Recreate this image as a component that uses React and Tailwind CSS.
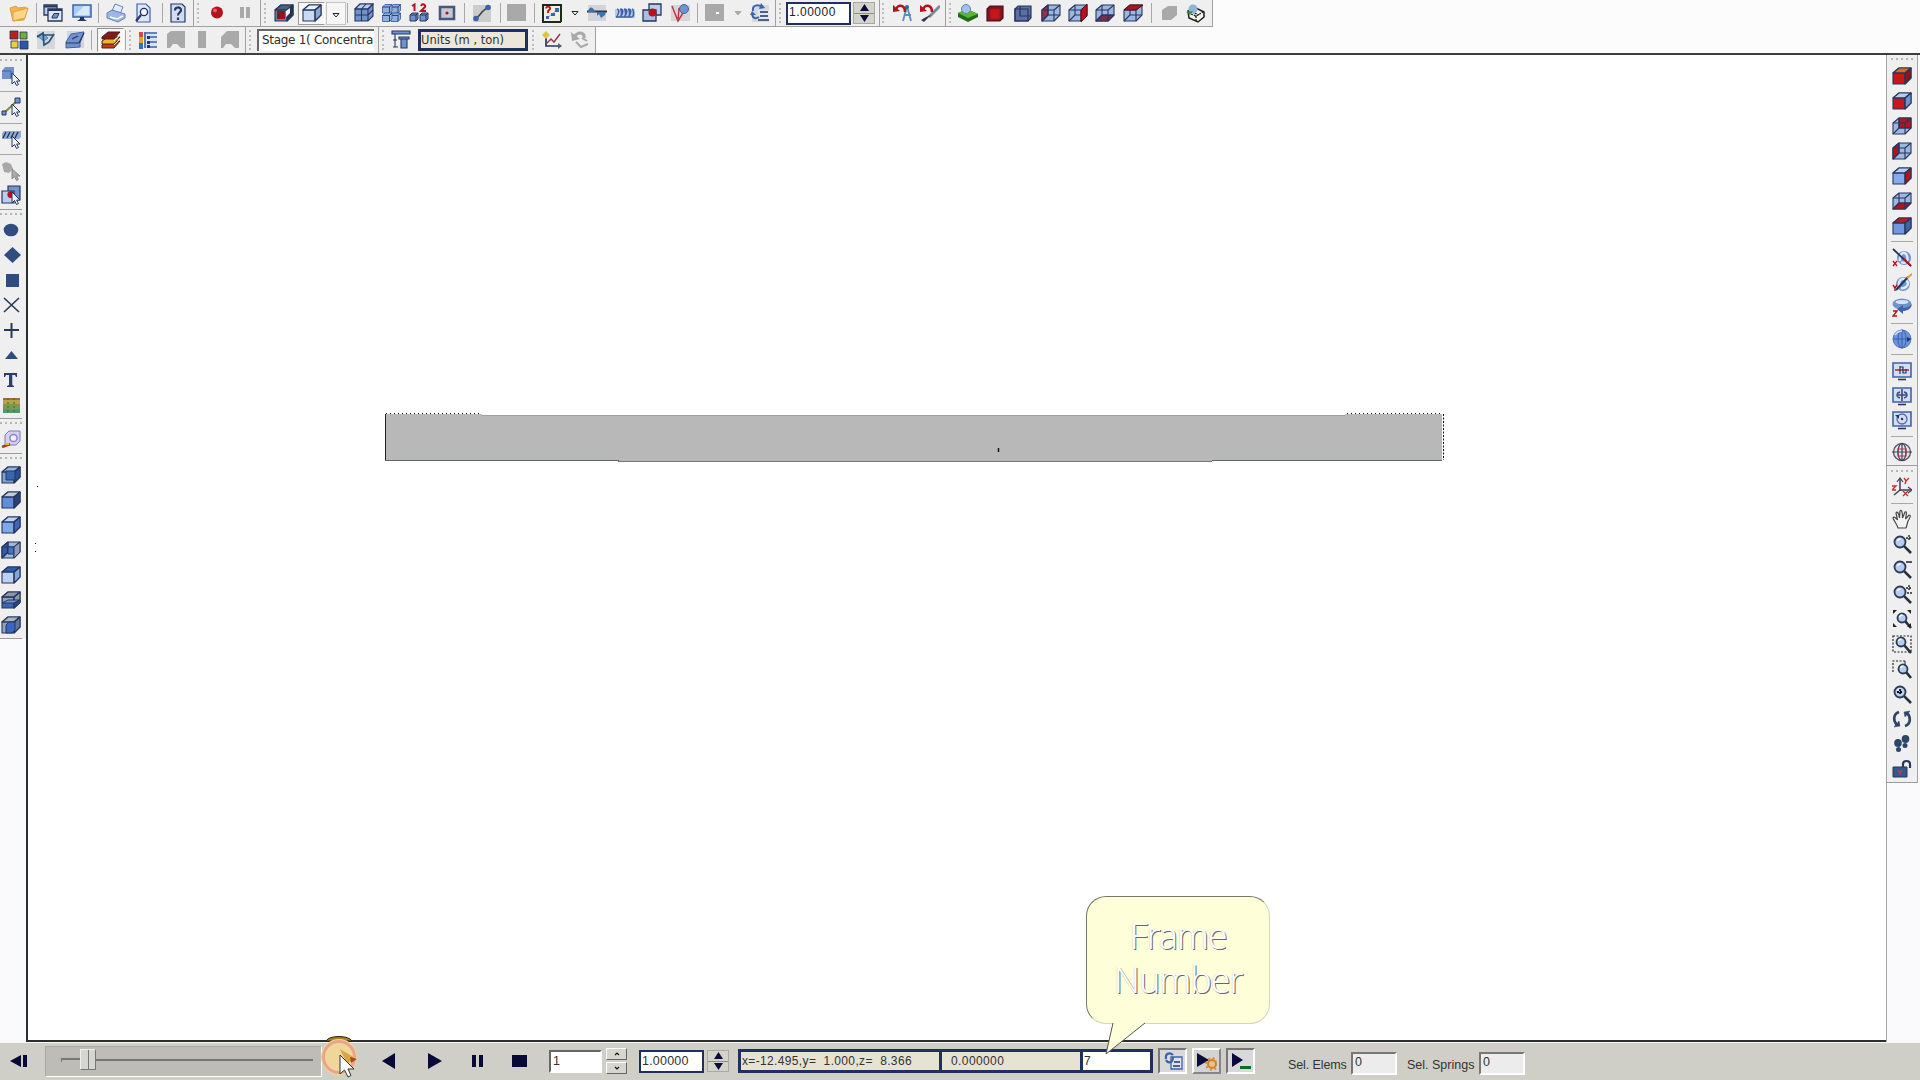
import React from "react";

const N = "#26365c";
const B = "#6f93cf";
const L = "#b9cdf0";
const D = "#3f63a8";
const R = "#b5121b";
const G = "#a9a9a9";

function Svg({ children, w = 20, h = 20 }) {
  return (
    <svg width={w} height={h} viewBox={`0 0 ${w} ${h}`} fill="none" className="block shrink-0">
      {children}
    </svg>
  );
}

function CubeShape({ f = B, t = L, s = D, wire, back, left, bottom }) {
  return (
    <g stroke={N} strokeWidth="1.1" strokeLinejoin="round">
      <path d="M1 7 7 2H19V12L13 18H1Z" fill={wire ? "#9db6e2" : f} />
      {!wire && <path d="M1 7 7 2H19L13 7Z" fill={t} />}
      {!wire && <path d="M13 7 19 2V12L13 18Z" fill={s} />}
      {wire && back && <path d="M7 2H19V12H7Z" fill={back} />}
      {wire && left && <path d="M1 7 7 2V12L1 18Z" fill={left} />}
      {wire && bottom && <path d="M1 18 7 12H19L13 18Z" fill={bottom} />}
      {wire && <path d="M7 2V12H19M7 12 1 18" />}
      <path d="M1 7H13V18M13 7 19 2" />
    </g>
  );
}

const Pointer = () => (
  <path d="M11 7V18L13.5 15.5 15.5 19.5 17.5 18.5 15.6 15H19Z" fill="#eef3fb" stroke={N} strokeWidth="1" />
);

function Lens({ x = 8, y = 8, r = 5.5 }) {
  return (
    <g>
      <path d={`M${x + r * 0.7} ${y + r * 0.7} 19 19`} stroke="#27303f" strokeWidth="2.6" />
      <circle cx={x} cy={y} r={r} fill="#b5cdf3" stroke="#2c3a55" strokeWidth="1.8" />
      <path d={`M${x - 2.5} ${y - 1}a3 3 0 0 1 3-2`} stroke="#fff" strokeWidth="1.3" />
    </g>
  );
}

const Monitor = ({ children }) => (
  <g>
    <path d="M1 2H19V16H1Z" fill="#d3def3" stroke={D} strokeWidth="1.6" />
    <path d="M6 18.5H14" stroke={N} strokeWidth="1.6" />
    {children}
  </g>
);

const UndoRed = () => (
  <g>
    <path d="M3 7C4 1 12 1 12 9" stroke={R} strokeWidth="2.6" />
    <path d="M0 2 0 9 7 8Z" fill={R} />
  </g>
);

const GridCube = ({ x = 0, y = 0, k = 1 }) => (
  <g transform={`translate(${x} ${y}) scale(${k})`} stroke={N} strokeWidth="1.1">
    <path d="M1 6 6 1H19V13L14 18H1Z" fill={B} />
    <path d="M1 6 6 1H19L14 6Z" fill={L} />
    <path d="M1 6H14V18M14 6 19 1M7.5 6V18M1 12H14L19 7M7.5 6 12 1" />
  </g>
);

const MiniCube = ({ x, y }) => (
  <g transform={`translate(${x} ${y})`} stroke={D} strokeWidth=".9">
    <path d="M.5 3 3 .5H10V6.500L7.500 9H.5Z" fill="#8fb0de" />
    <path d="M.5 3H7.500V9M7.500 3 10 .5" stroke={N} />
  </g>
);

const icons = {
  folder: (
    <g stroke="#e0a040" strokeWidth="1">
      <path d="M1 5 7 3 9 5 17 4V8L15 17 4 18Z" fill="#f2b650" />
      <path d="M4 9 19 5 16 15 4 18Z" fill="#fbd58a" />
    </g>
  ),
  windows: (
    <g stroke={N} strokeWidth="1.3">
      <path d="M1 2H14V12H1Z" fill={L} />
      <path d="M1 3.5H14" strokeWidth="2" />
      <path d="M5 6H19V18H5Z" fill="#dfe8f8" />
      <path d="M5 7H19" strokeWidth="2" />
      <path d="M9 14 11 10.500H16L14 15H9Z" fill={B} strokeWidth="1" />
    </g>
  ),
  monitor: (
    <g>
      <path d="M1 2H19V14H1Z" fill="#a9cdf5" stroke={D} strokeWidth="1.5" />
      <path d="M3 12 12 3H17V12Z" fill="#d7eafd" />
      <path d="M8 14H12V16L15 18H5L8 16Z" fill={N} />
    </g>
  ),
  printer: (
    <g stroke="#6681b8" strokeWidth="1">
      <path d="M6 8 9 1 17 4 14 11Z" fill="#e4eefb" />
      <path d="M1 10 6 7 19 11V15L12 19 1 15Z" fill="#9db7e3" />
      <path d="M4 14 11 16 17 13" stroke="#fff" strokeWidth="1.6" />
    </g>
  ),
  docsearch: (
    <g>
      <path d="M3 1H12L16 5V19H3Z" fill="#dde7f7" stroke={D} strokeWidth="1.2" />
      <path d="M7 12 2 18" stroke={N} strokeWidth="2.2" />
      <circle cx="10" cy="9" r="3.6" fill="#f1f6fe" stroke={N} strokeWidth="1.4" />
    </g>
  ),
  help: (
    <g>
      <path d="M3 1H14L17 4V19H3Z" fill="#cfdcf3" stroke={N} strokeWidth="1.2" />
      <path d="M7 7.5C7 3.5 13 3.5 13 7.3 13 9.6 10 9.5 10 12.5M10 14.5V17" stroke={N} strokeWidth="2.2" />
    </g>
  ),
  record: (
    <g>
      <circle cx="10" cy="9.5" r="6" fill={R} />
      <circle cx="8" cy="7.5" r="2" fill="#e4605f" />
    </g>
  ),
  pause: <path d="M5 4H9V15H5ZM11 4H15V15H11Z" fill={G} />,
  cubeDark: (
    <g>
      <CubeShape f="#6f7f9e" t="#4d5f86" s="#23304e" />
      <path d="M3 8H11V16H3Z" fill="#8e1420" />
      <path d="M12 8 16 5V10L12 14Z" fill="#f6f6f6" />
    </g>
  ),
  cubeLight: <CubeShape f="#c9dbf2" t="#e9f2fc" s="#8ba9d4" />,
  gridCube: <GridCube />,
  multiCube: (
    <g>
      <MiniCube x={9.500} y={1} />
      <MiniCube x={1} y={1} />
      <MiniCube x={9.500} y={9.500} />
      <MiniCube x={1} y={9.500} />
    </g>
  ),
  twelve: (
    <g>
      <path d="M3 3 5.500 1.5V8M12 3C13 0 17 1.500 16 4L12 8H17" stroke={R} strokeWidth="2" />
      <g stroke={N}>
        <path d="M1 12 3 10H9V16L7 18H1ZM11 12 13 10H19V16L17 18H11Z" fill={B} />
        <path d="M1 12H7V18M7 12 9 10M11 12H17V18M17 12 19 10" />
      </g>
    </g>
  ),
  frame: (
    <g>
      <path d="M3 4H17V16H3Z" fill="#c3c9d6" stroke="#4a5876" strokeWidth="2.6" />
      <circle cx="10" cy="10" r="1.6" fill={R} />
    </g>
  ),
  beads: (
    <g>
      <path d="M1 2H19V19H1Z" fill="#cccccc" />
      <path d="M4 15C8 14 9 7 16 5" stroke="#3a4a4a" strokeWidth="1.6" />
      <circle cx="4" cy="15.500" r="2.800" fill={D} />
      <circle cx="16" cy="4.500" r="2.800" fill={D} />
    </g>
  ),
  gray: <path d="M0 1H19V18H0Z" fill={G} />,
  grayDot: (
    <g>
      <path d="M0 1H19V18H0Z" fill={G} />
      <path d="M11 9H14V11H11Z" fill="#fff" />
    </g>
  ),
  check: (
    <g>
      <path d="M1 1H19V19H1Z" fill="#eef0e8" />
      <path d="M1 1V19H19M1 2H19V19" stroke="#1c2b16" strokeWidth="2" />
      <path d="M4 5.500C4 3 9 3 8 6L6 8V10" stroke={R} strokeWidth="1.800" />
      <path d="M4 16 16 6" stroke={G} />
      <path d="M13 5H17V9H13ZM9 10H13V13H9ZM4 13H7V16H4Z" fill={D} />
    </g>
  ),
  spring: (
    <g>
      <path d="M1 2H19V18H1Z" fill="#d2d4d8" />
      <path d="M0 8.500H20" stroke={N} strokeWidth="2" />
      <path d="M1 9C2 3 6 3 8 9ZM10 9V13L12 11 14 15 18 12 19 9Z" fill="#3c72ab" />
    </g>
  ),
  coils: (
    <g>
      <path d="M0 6H20V15H0Z" fill="#b9c9e6" />
      <path
        d="M2 6C6 7 2 14 1 14H5C8 12 6 6 5 6M6 6C10 7 6 14 5 14H9C12 12 10 6 9 6M10 6C14 7 10 14 9 14H13C16 12 14 6 13 6M14 6C18 7 14 14 13 14H17C20 12 18 6 17 6"
        stroke={D} strokeWidth="1.500"
      />
    </g>
  ),
  overlap: (
    <g>
      <path d="M7 1H19V12H7Z" fill={L} stroke={N} strokeWidth="1.300" />
      <path d="M1 7H14V18H1Z" fill="#a9bfe6" stroke={N} strokeWidth="1.300" />
      <circle cx="10.500" cy="9.500" r="4" fill={R} />
    </g>
  ),
  overlapPtr: (
    <g>
      <path d="M7 1H19V15H7Z" fill={B} stroke={N} strokeWidth="1.200" />
      <path d="M1 6H13V18H1Z" fill={L} stroke={N} strokeWidth="1.200" />
      <circle cx="10" cy="9.500" r="3.600" fill={R} />
      <Pointer />
    </g>
  ),
  branch: (
    <g>
      <path d="M1 2H20V18H1Z" fill="#d6d6d8" />
      <path d="M2 3 8 18 16 5M8 18 9 5" stroke="#bf3a45" strokeWidth="1.500" />
      <circle cx="14" cy="6" r="4.500" fill={B} stroke={D} />
    </g>
  ),
  refresh: (
    <g>
      <path d="M2 2H19V19H2Z" fill="#d5d9e0" />
      <path d="M8 7H19V18H8Z" fill="#dfe8f8" />
      <path d="M10 9H18M10 13H18M8 17H19" stroke={N} strokeWidth="1.500" />
      <path d="M3 8C2 2 8 1 12 4M2 11C3 16 6 16 9 14" stroke={D} strokeWidth="2" />
      <path d="M11 0 15 5 9 6ZM0 12 2 8 6 12Z" fill={D} />
    </g>
  ),
  undoCompass: (
    <g>
      <path d="M14 3 10 18M14 3 18 18M11 12H18" stroke="#5d8cbd" strokeWidth="1.800" />
      <circle cx="14" cy="4" r="2" fill="#37648f" />
      <UndoRed />
    </g>
  ),
  undoBrush: (
    <g>
      <path d="M20 3 9 14" stroke="#7b899c" strokeWidth="3" />
      <path d="M11 12 4 19 1 17 6 14Z" fill="#303a4a" />
      <UndoRed />
    </g>
  ),
  land: (
    <g>
      <path d="M0 10 9 6 20 11V14L10 19 0 14Z" fill="#1f6b16" />
      <path d="M0 10 9 6 20 11 10 15Z" fill="#5bb432" />
      <circle cx="8" cy="6" r="4.500" fill="#9ec3e6" stroke="#6487a6" />
    </g>
  ),
  boxRed: (
    <g stroke="#4a1020" strokeWidth="1.200">
      <path d="M2 6 5 3H18V15L15 18H2Z" fill="#7d1420" />
      <path d="M5 6H15V16H5Z" fill="#c4161d" stroke="#a0141d" />
    </g>
  ),
  boxBlue: (
    <g stroke={N} strokeWidth="1.200">
      <path d="M2 6 5 3H18V15L15 18H2Z" fill="#5a6fa6" />
      <path d="M7 3V13H18M2 6H15V18H2Z" />
    </g>
  ),
  wireLeft: <CubeShape wire left="#9c2f45" />,
  wireRight: (
    <g>
      <CubeShape wire />
      <path d="M13 7 19 1V13L13 19Z" fill={R} stroke="#5a0d18" />
    </g>
  ),
  wireBottom: <CubeShape wire bottom="#7d2d46" />,
  wireTop: (
    <g>
      <CubeShape wire />
      <path d="M1 7 7 2H20L13 7Z" fill="#a31822" stroke="#5a0d18" />
    </g>
  ),
  grayHex: <path d="M3 7 9 3H18V12L12 17H3Z" fill={G} />,
  recycle: (
    <g>
      <path d="M2 8 10 5 18 9V14L12 19 3 15Z" fill="#f2f5ea" stroke="#1b1b1b" strokeWidth="1.500" />
      <path d="M5 11 10 13 17 9M10 13V18M6 9 13 12" stroke="#1b1b1b" strokeWidth="1.300" strokeDasharray="2 1" />
      <circle cx="7" cy="6" r="4.500" fill="#8fb4da" />
      <path d="M0 9 7 8 4 12Z" fill="#3e8b2b" />
    </g>
  ),
  tiles: (
    <g stroke="#22304d" strokeWidth=".8">
      <path d="M1 1H9V9H1Z" fill="#b52222" />
      <path d="M11 2H18V9H11Z" fill="#6fae3c" />
      <path d="M2 11H9V18H2Z" fill="#e6ce45" />
      <path d="M11 11H19V19H11Z" fill="#2d56ad" />
    </g>
  ),
  planeWave: (
    <g>
      <path d="M1 1H19V19H1Z" fill="#d5d7da" />
      <path d="M1 6 7 3 12 8 8 11Z" fill="#7aa5d4" stroke="#5a84b8" />
      <path d="M1 7 7 3 8 15 13 12 18 4M8 5H18" stroke="#24557f" strokeWidth="1.700" />
    </g>
  ),
  planeBlue: (
    <g>
      <path d="M2 1H19V18H2Z" fill="#d0d5de" />
      <path d="M1 12 6 4 19 2 15 13V17L1 18Z" fill={B} stroke={D} />
      <path d="M1 13H14L19 3M7 9 13 6" stroke={N} strokeWidth="1.200" />
    </g>
  ),
  books: (
    <g stroke="#4a2418" strokeWidth="1">
      <path d="M1 15 7 11H19L13 18H1Z" fill="#c8381d" />
      <path d="M1 11 7 7H19L13 14H1Z" fill="#f0b52d" />
      <path d="M1 7 7 2H19L13 9H1Z" fill="#7d1d1d" />
      <path d="M13 11 19 5M13 15 19 9" stroke="#fff0c0" />
    </g>
  ),
  tree: (
    <g>
      <path d="M6 2H19V18H6Z" fill="#d9e3f6" />
      <path d="M1 2H5V19H1Z" fill="#d44" />
      <path d="M1 7H5V14H1Z" fill="#e0a42a" />
      <path d="M1 13H5V19H1Z" fill="#2f72c0" />
      <path d="M7 2V18M7 3H19M9 7H19M9 12H19M9 17H19" stroke={D} strokeWidth="1.700" />
      <path d="M9 6H12V9H9ZM9 11H12V14H9ZM9 15H12V18H9Z" fill={N} />
    </g>
  ),
  grayA: <path d="M1 4 5 1H19V18H15L11 14H7L4 18H1Z" fill={G} />,
  grayB: <path d="M6 1H14V18H6Z" fill={G} />,
  grayC: <path d="M1 7 7 1H19V18H15L11 14H6L3 18H1Z" fill={G} />,
  supports: (
    <g fill={B} stroke={N} strokeWidth="1.100">
      <path d="M1 1H19V4H1ZM8 7H18V9H8ZM10 9H16V18H10Z" />
      <path d="M4 4V10M2 10H6M4 10V17M2 17H7" />
    </g>
  ),
  chart: (
    <g>
      <path d="M4 3V16H19" stroke={N} strokeWidth="1.700" />
      <path d="M4 14 9 9 12 12 18 4" stroke="#9a3b55" strokeWidth="1.500" />
      <path d="M0 5 4 1 8 5 4 9Z" fill="#d9c73f" />
      <path d="M16 19 20 16 16 13Z" fill="#467" />
    </g>
  ),
  undoGray: (
    <g>
      <path d="M5 6C9 1 15 3 14 8" stroke={G} strokeWidth="3" />
      <path d="M1 2 2 11 10 9Z" fill={G} />
      <path d="M6 12 11 17 18 14M12 8 17 11" stroke={G} strokeWidth="2" />
    </g>
  ),
  pickCube: (
    <g>
      <path d="M1 5 4 1H13V9L10 13H1Z" fill={B} />
      <path d="M1 5H10V13" stroke={D} />
      <Pointer />
    </g>
  ),
  pickLine: (
    <g>
      <path d="M3 16 17 3" stroke="#7d8a3a" strokeWidth="2" />
      <path d="M1 14H5V18H1ZM14 1H19V6H14Z" fill={B} stroke={N} />
      <Pointer />
    </g>
  ),
  pickSpring: (
    <g>
      <path d="M1 4 3 2H20V8L18 10H1Z" fill="#8fabd9" />
      <path d="M2 9 5 3M6 9 9 3M10 9 13 3M14 9 17 3" stroke={N} strokeWidth="1.400" />
      <Pointer />
    </g>
  ),
  pickGray: (
    <g fill={G}>
      <path d="M1 3 5 1 10 3 12 8 8 12 3 11Z" />
      <path d="M11 8V18L13.500 15.500 15.500 19.500 17.500 18.500 15.600 15H19Z" stroke="#8b8b8b" />
    </g>
  ),
  circle: <ellipse cx="10" cy="10" rx="7.300" ry="6.300" fill="#2f4d80" />,
  diamond: <path d="M11.500 2 20 10 11.500 18 3 10Z" fill="#2f4d80" />,
  square: <path d="M5 4H18V17H5Z" fill="#2f4d80" />,
  cross: <path d="M3 3 18 17M18 3 3 17" stroke="#27385c" strokeWidth="1.600" />,
  plus: <path d="M3 10H18M10.500 3V18" stroke="#27385c" strokeWidth="2" />,
  triangle: <path d="M4 14 10.500 6 17 14Z" fill="#2f4d80" />,
  tee: <path d="M3 7V3H16V7H15L14 5H11.300V15L13 16V17H6V16L8 15V5H5L4 7Z" fill="#2a3f6c" />,
  picture: (
    <g>
      <path d="M2 3H19V18H2Z" fill="#7d9a4c" />
      <path d="M2 3H19V5H2Z" fill="#a9683b" />
      <path d="M2 5H19V9H2Z" fill="#b9a24c" />
      <path d="M2 14H19V18H2Z" fill="#4e9a70" />
      <path d="M7 3V18M13 3V18" stroke="#3c6b2a" strokeDasharray="2 2" />
    </g>
  ),
  tape: (
    <g>
      <path d="M4 6 8 2H19V12L15 16H4Z" fill="#d5d0ef" stroke="#8079b8" />
      <circle cx="12.500" cy="9" r="3.600" fill="#eef" stroke="#8a86c8" strokeWidth="1.500" />
      <path d="M1 18 9 15" stroke="#b03a22" strokeWidth="2.600" />
      <path d="M4 15H8" stroke="#e5b52e" strokeWidth="2" />
    </g>
  ),
  c1: (
    <g>
      <CubeShape f="#7ba3d4" t="#8fb4de" s="#2b4f94" />
      <path d="M5 6H14V15H5Z" fill="#3a67b3" stroke={N} />
    </g>
  ),
  c2: <CubeShape f="#5f8fdc" t="#c5ccd8" s="#2a4377" />,
  c3: <CubeShape f="#7fa8e8" t="#bcd3f5" s="#3c69bd" />,
  c4: (
    <g>
      <CubeShape wire left="#33599f" />
      <path d="M7 7H13V14H7Z" fill="#4872bd" stroke={N} />
      <path d="M13 7 19 2V12L13 18Z" fill="#8e9cb8" stroke={N} />
    </g>
  ),
  c5: <CubeShape f="#bcd0f2" t="#2e5bb0" s="#84a5dc" />,
  c6: (
    <g>
      <CubeShape f="#3a66b3" t="#8d97a6" s="#8d97a6" />
      <path d="M2 8H12V12H2Z" fill="#9aa2ae" />
      <path d="M1 13 7 10H19L13 13Z" fill="#6f97d8" stroke={N} />
      <path d="M13 13 19 10V13L13 18Z" fill="#27478a" stroke={N} />
    </g>
  ),
  c7: (
    <g>
      <CubeShape f="#94a4bd" t="#aab4c4" s="#5f7699" />
      <path d="M5 10 8 7H14V15L11 18H5Z" fill="#3767c0" stroke={N} />
    </g>
  ),
  r1: <CubeShape f="#c8171c" t="#dd6a20" s="#8c1517" />,
  r2: <CubeShape f="#c8171c" t={L} s={B} />,
  r3: <CubeShape wire back="#b5121b" />,
  r4: <CubeShape wire left="#b5121b" />,
  r5: <CubeShape f="#84acec" t={L} s="#b5121b" />,
  r6: <CubeShape wire bottom="#b5121b" />,
  r7: <CubeShape f="#6f98e0" t="#c8171c" s={D} />,
  rotX: (
    <g>
      <circle cx="12" cy="10" r="7" fill={B} />
      <path d="M8 13C7 5 13 2 15 8S13 16 9 14" stroke="#dfe9fb" strokeWidth="2.400" />
      <path d="M1 1 19 18" stroke={N} strokeWidth="1.800" />
      <path d="M12 11 19 18" stroke={R} strokeWidth="1.800" />
      <path d="M1 13 5 18M5 13 1 18" stroke={R} strokeWidth="1.300" />
    </g>
  ),
  rotY: (
    <g>
      <circle cx="11" cy="11" r="7" fill={B} />
      <path d="M7 14C6 5 12 4 15 8S13 16 9 15" stroke="#dfe9fb" strokeWidth="2.400" />
      <path d="M4 17 16 4" stroke={N} strokeWidth="2" />
      <path d="M15 5 20 1" stroke="#e39b2a" strokeWidth="2" />
      <path d="M1 12 3 15 5 12M3 15V18" stroke={R} strokeWidth="1.400" />
    </g>
  ),
  rotZ: (
    <g>
      <ellipse cx="10" cy="7" rx="9.500" ry="5.500" fill={B} />
      <ellipse cx="10" cy="5" rx="6.500" ry="2" fill="#d8e3f6" />
      <path d="M20 7C19 13 14 14 11 14V17L5 12 11 8V11C14 11 17 10 20 7Z" fill={D} />
      <path d="M1 14H5L1 19H5" stroke={R} strokeWidth="1.400" />
    </g>
  ),
  globe: (
    <g>
      <circle cx="10" cy="10" r="9" fill="#6a93de" stroke="#5577c0" />
      <ellipse cx="10" cy="10" rx="4" ry="9" stroke="#3c5fae" />
      <path d="M1 10H19M10 1V19" stroke="#3c5fae" />
      <path d="M3 6C6 2 9 2 10 2" stroke="#cfe0fa" strokeWidth="1.500" />
      <path d="M15 8 19 10 15 13Z" fill={N} />
    </g>
  ),
  mon1: (
    <Monitor>
      <path d="M3 9H17" stroke={R} strokeWidth="1.400" />
      <path d="M8 5V13M8 6H11V12H14V8" stroke={N} strokeWidth="1.200" />
    </Monitor>
  ),
  mon2: (
    <Monitor>
      <path d="M10 3V15" stroke={N} strokeWidth="1.400" />
      <path d="M8 6C4 7 4 11 8 12M12 6C16 7 16 11 12 12M6 9H14" stroke="#374a80" strokeWidth="1.400" />
    </Monitor>
  ),
  mon3: (
    <Monitor>
      <circle cx="10" cy="9" r="5" stroke="#5a6da0" strokeWidth="1.300" />
      <circle cx="10" cy="9" r="1.200" fill={N} />
      <path d="M3 5H7V9Z" fill={N} />
    </Monitor>
  ),
  globeRed: (
    <g>
      <circle cx="10" cy="10" r="8.500" fill="#e7e6ee" stroke="#59596b" strokeWidth="1.400" />
      <ellipse cx="10" cy="10" rx="4" ry="8.500" stroke="#3e3e55" strokeWidth="1.200" />
      <path d="M0 10H20M10 1V19" stroke="#3e3e55" strokeWidth="1.200" />
      <path d="M6 7H14V14H6Z" stroke="#b5324e" strokeWidth="1.200" />
    </g>
  ),
  axes: (
    <g>
      <path d="M8 14V2M8 13H19M8 13 2 18" stroke="#3b4150" strokeWidth="1.500" />
      <path d="M5 5 8 1 11 5M16 10 20 13 16 16" stroke="#3b4150" strokeWidth="1.200" />
      <path d="M12 1 14 4 17 1M14 4 13 7M11 14 16 19M16 14 11 19M0 9H4L0 13H4" stroke="#c5333a" strokeWidth="1.400" />
    </g>
  ),
  hand: (
    <path
      d="M6 19C5 15 2 12 1 9 2 7 4 9 5.500 11L4 4C5 2 6.500 3 7.500 9L8 2C9 .5 10.500 1 10.500 9L13 3C14.500 2 15 4 13.500 10L17 6C19 6 18.500 8 16 12 15 15 15 17 14 19Z"
      fill="#f4f2f2" stroke="#494949" strokeWidth="1.200"
    />
  ),
  zoomIn: (<g><Lens /><path d="M14 4H20M17 1V7" stroke="#222" strokeWidth="1.400" strokeDasharray="2 1" /></g>),
  zoomOut: (<g><Lens /><path d="M14 3H20" stroke="#222" strokeWidth="1.500" /></g>),
  zoomPM: (<g><Lens /><path d="M14 4H20M17 1V7M15 9H20" stroke="#222" strokeWidth="1.400" strokeDasharray="2 1" /></g>),
  zoomFit: (<g><Lens x={10} y={9} r={4.500} /><path d="M1 1H5L1 5ZM19 1V5L15 1ZM1 18H5L1 14ZM19 18H15L19 14Z" fill="#222" /></g>),
  zoomBox: (<g><path d="M1 2H19V18H1Z" stroke="#222" strokeWidth="1.200" strokeDasharray="2 1.500" /><Lens x={9} y={8} r={4.500} /></g>),
  zoomArea: (<g><path d="M13 2H1V14" stroke="#222" strokeWidth="1.200" strokeDasharray="2 1.500" /><path d="M13 2V6" stroke="#222" /><Lens x={11} y={10} r={4.500} /></g>),
  zoomAll: (<g><Lens /><path d="M8 5V11M5 8H11" stroke="#111" strokeWidth="1.800" strokeDasharray="2 1" /></g>),
  rotate: (
    <g stroke="#2c4468" strokeWidth="2.600">
      <path d="M7 3C1 5 1 12 5 16M13 17C19 15 19 8 15 4" />
      <path d="M2 18 8 17 7 12ZM18 2 12 3 13 8Z" fill="#2c4468" strokeWidth=".5" />
    </g>
  ),
  feet: (
    <g fill="#2d4566">
      <ellipse cx="6" cy="9" rx="3.800" ry="4" />
      <ellipse cx="6.500" cy="15.500" rx="2.500" ry="2.500" />
      <ellipse cx="13.500" cy="5" rx="3.800" ry="4" />
      <ellipse cx="13" cy="11.500" rx="2.500" ry="2.500" />
    </g>
  ),
  lock: (
    <g>
      <path d="M1 8H15V18H1Z" fill="#34588c" stroke={N} />
      <path d="M11 8V5C11 1 18 1 18 5V9" stroke={N} strokeWidth="2.200" />
      <path d="M6 11 8 14 10 11M8 14V16" stroke="#c43b4a" strokeWidth="1.300" />
    </g>
  ),
};

const Icon = ({ n, m = "" }) => (
  <span className={`block h-5 w-5 shrink-0 ${m}`}>
    <Svg>{icons[n]}</Svg>
  </span>
);
const VSep = ({ m, full }) => (
  <span className={`block w-px shrink-0 ${full ? "h-full bg-[#a0a0a0]" : "h-5 bg-[#a8a8a8]"} ${m}`} />
);
const HSep = ({ m, full }) => (
  <span className={`block h-px shrink-0 ${full ? "w-full bg-[#9c9c9c]" : "w-[22px] bg-[#a8a8a8]"} ${m}`} />
);
const VGrip = ({ m }) => (
  <span className={`flex h-5 w-1 shrink-0 flex-col justify-between ${m}`}>
    {[0, 1, 2, 3, 4].map((i) => (
      <i key={i} className="block h-0.5 w-0.5 bg-[#bdbdbd]" />
    ))}
  </span>
);
const HGrip = ({ m }) => (
  <span className={`flex h-1 w-[22px] shrink-0 items-center justify-between ${m}`}>
    {[0, 1, 2, 3, 4].map((i) => (
      <i key={i} className="block h-0.5 w-0.5 bg-[#b5b5b5]" />
    ))}
  </span>
);
const Drop = ({ m, gray }) => (
  <span className={`block shrink-0 ${m}`}>
    <Svg w={8} h={6}>
      <path d="M1 1.500H7L4 5Z" fill={gray ? "#aaa" : "#fff"} stroke={gray ? "#aaa" : "#222"} />
    </Svg>
  </span>
);
const Spinner = ({ m }) => (
  <span className={`flex h-[22px] w-[22px] shrink-0 flex-col border border-[#a9a99f] bg-[#d3d3cb] ${m}`}>
    <span className="flex flex-1 items-center justify-center border-b border-[#8f8f8a]">
      <Svg w={11} h={8}><path d="M5.500 0 10 7H1Z" fill="#0b0b3c" /></Svg>
    </span>
    <span className="flex flex-1 items-center justify-center">
      <Svg w={11} h={8}><path d="M5.500 8 10 1H1Z" fill="#0b0b3c" /></Svg>
    </span>
  </span>
);

const render = (Sep, Grip) => ([n, m], i) => {
  if (n === "|") return <Sep key={i} m={m} />;
  if (n === "end") return <Sep key={i} m={m} full />;
  if (n === ":") return <Grip key={i} m={m} />;
  if (n === "drop") return <Drop key={i} m={m} />;
  if (n === "dropGray") return <Drop key={i} m={m} gray />;
  return <Icon key={i} n={n} m={m} />;
};
const across = render(VSep, VGrip);
const down = render(HSep, HGrip);

const top1a = [
  ["folder", "ml-[9px]"], ["|", "ml-[7px]"], ["windows", "ml-1.5"], ["monitor", "ml-[9px]"], ["|", "ml-1.5"],
  ["printer", "ml-[7px]"], ["docsearch", "ml-2"], ["|", "ml-2"], ["help", "ml-[5px]"], ["end", "ml-[5px]"],
  [":", "ml-[3px]"], ["record", "ml-1.5"], ["pause", "ml-2"], ["end", "ml-[5px]"], [":", "ml-[3px]"],
  ["cubeDark", "ml-1.5"],
];
const top1b = [
  ["|", "ml-px"], ["gridCube", "ml-1.5"], ["multiCube", "ml-[7px]"], ["twelve", "ml-2"], ["frame", "ml-2"],
  ["|", "ml-[7px]"], ["beads", "ml-[7px]"], ["|", "ml-2"], ["gray", "ml-1.5"], ["|", "ml-[7px]"],
  ["check", "ml-[7px]"], ["drop", "ml-[9px]"], ["spring", "ml-2"], ["coils", "ml-2"], ["overlap", "ml-[7px]"],
  ["branch", "ml-2"], ["|", "ml-[7px]"], ["grayDot", "ml-[7px]"], ["dropGray", "ml-[9px]"], ["refresh", "ml-2"],
  ["end", "ml-[5px]"], [":", "ml-[3px]"],
];
const top1c = [
  ["end", "ml-1"], [":", "ml-0.5"], ["undoCompass", "ml-[7px]"], ["undoBrush", "ml-[7px]"], ["end", "ml-[5px]"],
  [":", "ml-[3px]"], ["land", "ml-[5px]"], ["boxRed", "ml-[7px]"], ["boxBlue", "ml-2"], ["wireLeft", "ml-2"],
  ["wireRight", "ml-[7px]"], ["wireBottom", "ml-[7px]"], ["wireTop", "ml-2"], ["|", "ml-2"], ["grayHex", "ml-[7px]"],
  ["recycle", "ml-[7px]"],
];
const top2a = [["tiles", "ml-[9px]"], ["planeWave", "ml-[7px]"], ["planeBlue", "ml-[9px]"], ["|", "ml-1.5"]];
const top2b = [
  ["|", "ml-px"], [":", "ml-[3px]"], ["tree", "ml-[5px]"], ["grayA", "ml-2"], ["grayB", "ml-1.5"],
  ["grayC", "ml-2"], ["end", "ml-[5px]"], [":", "ml-[3px]"],
];
const top2c = [["end", "ml-[5px]"], [":", "ml-[3px]"], ["supports", "ml-[5px]"]];
const top2d = [[":", "ml-1"], ["chart", "ml-1.5"], ["undoGray", "ml-2"]];

const left = [
  [":", "mt-[3px]"], ["pickCube", "mt-1"], ["|", "mt-[5px]"], ["pickLine", "mt-[5px]"], ["|", "mt-1.5"],
  ["pickSpring", "mt-[5px]"], ["|", "mt-[5px]"], ["pickGray", "mt-1.5"], ["overlapPtr", "mt-1"], ["end", "mt-1"],
  [":", "mt-0.5"], ["circle", "mt-1"], ["diamond", "mt-[5px]"], ["square", "mt-[5px]"], ["cross", "mt-[5px]"],
  ["plus", "mt-[5px]"], ["triangle", "mt-[5px]"], ["tee", "mt-[5px]"], ["picture", "mt-[5px]"], ["end", "mt-[3px]"],
  [":", "mt-0.5"], ["tape", "mt-1"], ["end", "mt-1"], [":", "mt-0.5"], ["c1", "mt-[5px]"], ["c2", "mt-[5px]"],
  ["c3", "mt-[5px]"], ["c4", "mt-[5px]"], ["c5", "mt-[5px]"], ["c6", "mt-[5px]"], ["c7", "mt-[5px]"], ["end", "mt-[3px]"],
];
const right = [
  [":", "mt-0.5"], ["r1", "mt-[5px]"], ["r2", "mt-[5px]"], ["r3", "mt-[5px]"], ["r4", "mt-[5px]"], ["r5", "mt-[5px]"],
  ["r6", "mt-[5px]"], ["r7", "mt-[5px]"], ["|", "mt-[5px]"], ["rotX", "mt-1.5"], ["rotY", "mt-[5px]"],
  ["rotZ", "mt-1"], ["|", "mt-1.5"], ["globe", "mt-[5px]"], ["|", "mt-[5px]"], ["mon1", "mt-1.5"],
  ["mon2", "mt-[5px]"], ["mon3", "mt-1"], ["|", "mt-1.5"], ["globeRed", "mt-[5px]"], ["end", "mt-[3px]"],
  [":", "mt-[3px]"], ["axes", "mt-1"], ["|", "mt-1.5"], ["hand", "mt-[5px]"], ["zoomIn", "mt-[5px]"],
  ["zoomOut", "mt-[5px]"], ["zoomPM", "mt-[5px]"], ["zoomFit", "mt-[5px]"], ["zoomBox", "mt-[5px]"],
  ["zoomArea", "mt-[5px]"], ["zoomAll", "mt-[5px]"], ["rotate", "mt-[5px]"], ["feet", "mt-[5px]"],
  ["lock", "mt-[5px]"], ["end", "mt-[3px]"],
];

function TopBars() {
  return (
    <header className="h-[55px] shrink-0 border-b-2 border-[#3c3f3f] bg-[#fcfcfd]">
      <div className="flex h-[27px] w-[1213px] items-center border-r border-b border-[#a0a0a0] bg-[#efeff0]">
        {top1a.map(across)}
        <span className="ml-1 flex h-[23px] w-[27px] shrink-0 items-center justify-center border border-[#9a9a9a] border-r-white bg-[#f6f6f6] pl-px">
          <Icon n="cubeLight" />
        </span>
        <span className="ml-px flex h-[23px] w-5 shrink-0 items-center justify-center border border-[#c4c4c4] bg-[#f6f6f6] pt-1">
          <Drop m="" />
        </span>
        {top1b.map(across)}
        <span className="ml-[3px] flex h-[23px] w-[65px] shrink-0 items-center border-2 border-[#20305c] bg-white pb-[3px] pl-px text-[12px] leading-none tracking-[0.5px] text-[#222]">
          1.00000
        </span>
        <Spinner m="ml-0.5" />
        {top1c.map(across)}
      </div>
      <div className="flex h-[26px] w-[596px] items-center border-r border-[#a0a0a0] bg-[#efeff0]">
        {top2a.map(across)}
        <span className="ml-[5px] flex h-6 w-[27px] shrink-0 items-center justify-center border border-[#8f8f8f] border-r-white border-b-white bg-[#f7f7f7]">
          <Icon n="books" />
        </span>
        {top2b.map(across)}
        <span className="ml-1 flex h-[22px] w-[117px] shrink-0 items-center overflow-hidden border-t-2 border-l-2 border-[#666] bg-white pb-[3px] pl-[3px] font-['DejaVu_Sans',sans-serif] text-[12px] leading-[16px] tracking-[-0.3px] whitespace-nowrap text-[#2d2d2d]">
          Stage 1( Concentra
        </span>
        <VSep m="ml-1" full />
        {top2c.slice(1).map(across)}
        <span className="ml-[7px] flex h-[22px] w-[110px] shrink-0 items-center border-[3px] border-[#20305c] bg-[#ece7d8] font-['DejaVu_Sans',sans-serif] text-[11.500px] leading-none whitespace-nowrap text-[#333]">
          <span className="pt-0.5">Units (m , ton)</span>
        </span>
        {top2d.map(across)}
      </div>
    </header>
  );
}

function Beam() {
  return (
    <Svg w={1066} h={52}>
      <path d="M3 4H100V5H963V4H1060V50H830V51H237V50H3Z" fill="#b8b8b8" />
      <path d="M100 5.500H963" stroke="#9b9f9b" />
      <path d="M3.500 4V51" stroke="#222" />
      <path d="M3 50.500H237M830 50.500H1060" stroke="#5f6663" />
      <path d="M236 51.500H830" stroke="#747674" />
      <path d="M4 3.500H100M965 3.500H1061" stroke="#111" strokeDasharray="1 3" />
      <path d="M1061.500 4V50" stroke="#111" strokeDasharray="2 1.500" />
      <path d="M616.500 38V42" stroke="#111" strokeWidth="1.500" />
    </Svg>
  );
}

function Viewport() {
  return (
    <main className="h-full w-[1860px] shrink-0 border-b-2 border-l-2 border-[#2b2f2c] bg-white">
      <div className="pt-[355px] pl-[354px]">
        <Beam />
      </div>
      <div className="flex flex-col pl-2">
        <i className="mt-[24px] ml-px block h-px w-px bg-black" />
        <i className="mt-[56px] -ml-px block h-px w-px bg-black" />
        <i className="mt-[7px] -ml-px block h-px w-px bg-black" />
      </div>
    </main>
  );
}

const Glyph = ({ d, m }) => (
  <span className={`block shrink-0 ${m}`}>
    <Svg w={18} h={18}><path d={d} fill="#090938" /></Svg>
  </span>
);

function ToolButton({ m, raised, children }) {
  return (
    <span
      className={`flex h-[26px] w-[29px] shrink-0 items-center justify-center border-2 ${m} ${
        raised ? "border-[#85858a] border-t-white border-l-white bg-[#d3d3d0]" : "border-white border-t-[#77777a] border-l-[#77777a] bg-[#d9d9d9]"
      }`}
    >
      <Svg>{children}</Svg>
    </span>
  );
}

function Playback() {
  return (
    <footer className="flex h-[38px] shrink-0 items-center border-t border-[#f6f6f2] bg-[#cfcfc8] pb-px text-[12.500px] text-[#333]">
      <Glyph m="ml-[10px]" d="M0 9 11 3V15ZM13 3H17V15H13Z" />
      <div className="ml-[17px] flex h-[31px] w-[277px] shrink-0 items-center border border-[#a8a8a2] border-r-white border-b-white bg-[#bdbcb6] pb-0.5">
        <span className="ml-[15px] block h-1 w-[19px] border-t-2 border-l border-[#77776f]" />
        <span className="mb-0.5 flex h-[21px] w-4 items-stretch justify-center border border-[#eee] border-r-[#777] border-b-[#777] bg-[#d6d6d0]">
          <i className="block w-px bg-[#777]" />
        </span>
        <span className="block h-0.5 w-[217px] bg-[#77776f]" />
      </div>
      <Glyph m="ml-[58px]" d="M2 9 15 1V17Z" />
      <Glyph m="ml-[29px]" d="M1 1 15 9 1 17Z" />
      <Glyph m="ml-[24px]" d="M3 3H7V15H3ZM10 3H14V15H10Z" />
      <Glyph m="ml-[24px]" d="M1 3H16V15H1Z" />
      <span className="ml-5 flex h-[23px] w-[53px] shrink-0 items-center border-2 border-white border-t-[#666] border-l-[#666] bg-white pl-0.5">1</span>
      <span className="ml-1 flex h-[26px] w-[21px] shrink-0 flex-col gap-0.5">
        {["M2 4 4 2 6 4", "M2 2 4 4 6 2"].map((d) => (
          <span key={d} className="flex flex-1 items-center justify-center border border-white border-r-[#666] border-b-[#666] bg-[#d6d6cf]">
            <Svg w={8} h={6}><path d={d} stroke="#111" strokeWidth="1.200" /></Svg>
          </span>
        ))}
      </span>
      <span className="ml-3 flex h-[23px] w-[65px] shrink-0 items-center border-2 border-[#20305c] bg-white pl-px text-[12.500px] tracking-[0.2px]">1.00000</span>
      <Spinner m="ml-[3px]" />
      <div className="ml-[9px] flex h-[24px] w-[415px] shrink-0 items-stretch border-[3px] border-[#20305c] bg-[#e6e2d4] text-[12px]">
        <span className="flex w-[201px] shrink-0 items-center border-r-[3px] border-[#20305c] pl-px tracking-[0.35px] whitespace-pre">
          x=-12.495,y=  1.000,z=  8.366
        </span>
        <span className="flex w-[141px] shrink-0 items-center border-r-[3px] border-[#20305c] pl-[9px] tracking-[0.4px]">0.000000</span>
        <span className="flex flex-1 items-center bg-white pl-px">7</span>
      </div>
      <ToolButton m="ml-[5px]">
        <path d="M8 6H19V18H8Z" fill="#dbe6fa" stroke={D} strokeWidth="1.300" />
        <path d="M11 11H17M10 15H17" stroke={N} strokeWidth="1.600" />
        <path d="M3 8C2 2 7 1 10 4M10 6C10 12 5 13 3 9" stroke={D} strokeWidth="2.200" />
      </ToolButton>
      <ToolButton m="ml-[5px]" raised>
        <path d="M0 2 12 9 0 16Z" fill="#0b0b3c" />
        <circle cx="15" cy="13" r="4" fill="#ecc183" stroke="#d08026" strokeWidth="2" />
        <circle cx="15" cy="13" r="6" stroke="#d08026" strokeWidth="1.500" strokeDasharray="2 2.700" />
      </ToolButton>
      <ToolButton m="ml-[5px]">
        <path d="M1 2 12 9 1 16Z" fill="#0b0b3c" />
        <path d="M9 15H20V18H9Z" fill="#0c6b24" />
      </ToolButton>
      <span className="mt-[9px] ml-[33px] w-[60px] shrink-0 text-[12.500px] tracking-[-0.1px] whitespace-nowrap">Sel. Elems</span>
      <span className="mt-1 ml-[3px] flex h-[23px] w-[46px] shrink-0 items-center border-2 border-white border-t-[#777] border-l-[#777] bg-[#ececec] pb-0.5 pl-0.5">0</span>
      <span className="mt-[9px] ml-2.5 w-[68px] shrink-0 text-[12.500px] tracking-[0px] whitespace-nowrap">Sel. Springs</span>
      <span className="mt-1 ml-1 flex h-[23px] w-[46px] shrink-0 items-center border-2 border-white border-t-[#777] border-l-[#777] bg-[#ececec] pb-0.5 pl-0.5">0</span>
    </footer>
  );
}

function Callout() {
  return (
    <div className="absolute top-[896px] left-[1086px] h-[128px] w-[184px]">
      <p className="h-full w-full rounded-[20px] border border-[#77776a] border-r-[#d5d5b8] border-b-[#d5d5b8] bg-[#fefed9] px-5 pt-[17px] text-center font-['Noto_Sans',sans-serif] text-[36px] leading-[44px] font-light tracking-[-1.2px] text-white [text-shadow:1px_1px_0_#666,-0.5px_-0.5px_0_#d5d5b5]">
        Frame Number
      </p>
      <div className="absolute top-[126px] left-[18px]">
        <Svg w={44} h={34}>
          <path d="M9 0 2 32 42 0Z" fill="#fefed9" />
          <path d="M9 1 2 32 41 1" stroke="#55554c" />
        </Svg>
      </div>
    </div>
  );
}

function ClickCursor() {
  return (
    <div className="absolute top-[1033px] left-[319px]">
      <Svg w={42} h={46}>
        <path d="M7 8C10 2 30 2 33 8Z" fill="#a8831a" stroke="#2c2510" />
        <circle cx="20" cy="24" r="18" fill="#f0d69a" />
        <circle cx="20" cy="24" r="15.500" stroke="#e8a58a" strokeWidth="3" />
        <path d="M21 16 36 25 28 31Z" fill="#d9a548" />
        <path d="M31 24 38 26 32 30Z" fill="#b3452a" />
        <path d="M21 22V41L25.500 37 29 44 32 42.500 29 36H35Z" fill="#fff" stroke="#333" />
      </Svg>
    </div>
  );
}

export default function App() {
  return (
    <div className="relative flex h-[1080px] w-[1920px] flex-col overflow-hidden bg-white font-['Liberation_Sans',sans-serif]">
      <TopBars />
      <div className="flex h-[987px] shrink-0">
        <aside className="w-[26px] shrink-0 bg-[#fafafc]">
          <div className="flex flex-col items-center bg-[#efeff0] pr-1">{left.map(down)}</div>
        </aside>
        <Viewport />
        <aside className="flex-1 border-l border-[#a5a5a5] bg-[#fafafc]">
          <div className="flex w-[31px] flex-col items-center border-r border-[#a5a5a5] bg-[#efeff0]">{right.map(down)}</div>
        </aside>
      </div>
      <Playback />
      <Callout />
      <ClickCursor />
    </div>
  );
}
